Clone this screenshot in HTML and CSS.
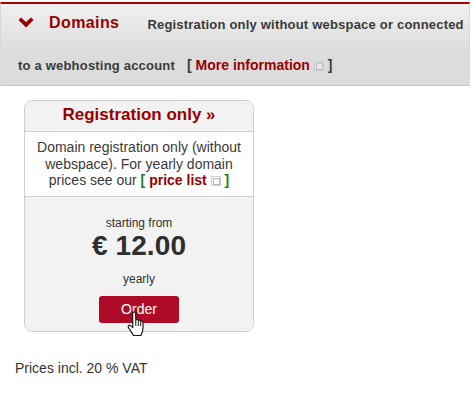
FILE: index.html
```html
<!DOCTYPE html>
<html lang="en">
<head>
<meta charset="utf-8">
<title>Domains</title>
<link rel="stylesheet" href="styles.css">
</head>
<body>
<header class="bar">
  <p class="bar-text"><svg class="chevron" width="16" height="11" viewBox="0 0 16 11"><path d="M0.5 3 L3 0.5 L8 5 L13 0.5 L15.5 3 L8 10.5 Z" fill="#990000"/></svg><span class="bar-title">Domains</span><span class="bar-desc">Registration only without webspace or connected to a webhosting account</span><span class="bar-more">[ <a class="link" href="#">More information</a> <svg class="ext" width="10" height="10" viewBox="0 0 10 10"><rect x="0.5" y="0.5" width="9" height="9" fill="none" stroke="#d0d0d0"/><rect x="2.5" y="2.5" width="6" height="6" fill="#e8e8e8" stroke="#bdbdbd"/></svg> ]</span></p>
</header>
<main class="content">
  <section class="card">
    <h2 class="card-title">Registration only »</h2>
    <p class="card-desc">Domain registration only (without webspace). For yearly domain prices see our <span class="bracket">[ <a class="link" href="#">price list</a> <svg class="ext" width="10" height="10" viewBox="0 0 10 10"><rect x="0.5" y="0.5" width="9" height="9" fill="none" stroke="#d0d0d0"/><rect x="2.5" y="2.5" width="6" height="6" fill="#fff" stroke="#b4b4b4"/></svg> ]</span></p>
    <div class="card-price">
      <div class="from">starting from</div>
      <div class="price">€ 12.00</div>
      <div class="period">yearly</div>
      <div class="btn-wrap">
        <a class="btn" href="#">Order</a>
        <svg class="cursor" width="20" height="26" viewBox="0 0 20 26"><path d="M6 1.5 C7 0.5 8.5 1 8.7 2.5 L8.8 9 C9.5 8.2 11 8.4 11.3 9.4 C12 8.8 13.4 9 13.7 10.2 C14.5 9.8 16 10.2 16 11.8 L16 17 C16 20 15 22 14 24.5 L6.5 24.5 C5.5 22.5 3.5 20 1.5 16.5 C0.6 15 2 13.6 3.4 14.6 L5.8 16.5 L5.6 3 C5.6 2.3 5.7 1.8 6 1.5 Z" fill="#fff" stroke="#1a1a1a" stroke-width="1.2" stroke-linejoin="round"/><path d="M8.8 9 L8.8 15 M11.3 9.4 L11.3 15 M13.7 10.2 L13.7 15" stroke="#1a1a1a" stroke-width="1" fill="none"/></svg>
      </div>
    </div>
  </section>
  <p class="note">Prices incl. 20 % VAT</p>
</main>
</body>
</html>
```
FILE: styles.css
```css
* { box-sizing: border-box; }
html, body { margin: 0; padding: 0; background: #fff; }
body {
  width: 474px;
  height: 402px;
  overflow: hidden;
  padding-top: 2px;
  font-family: "Liberation Sans", Arial, sans-serif;
  color: #333;
}
.bar {
  width: 470px;
  height: 84px;
  border-top: 2px solid #a80000;
  border-left: 1px solid #d8d8d8;
  border-right: 1px solid #d8d8d8;
  border-bottom: 1px solid #c8c8c8;
  background: linear-gradient(#f0f0f0, #dcdcdc 60%, #dcdcdc);
  padding: 0 0 0 17px;
}
.bar-text {
  margin: 0;
  font-size: 14px;
  font-weight: bold;
  line-height: 40px;
  color: #3a3a3a;
}
.chevron { margin-right: 15px; vertical-align: 1px; }
.bar-title {
  display: inline-block;
  font-size: 16px;
  line-height: 16px;
  letter-spacing: 0.4px;
  color: #990000;
  margin-right: 28px;
  vertical-align: 1px;
}
.bar-desc { font-size: 13px; letter-spacing: 0.2px; }
.bar-more { margin-left: 12px; }
.link { color: #990000; text-decoration: none; font-weight: bold; }
.ext { vertical-align: -1px; }
.content { padding: 14px 0 0 24px; }
.card {
  width: 230px;
  border: 1px solid #cfcfcf;
  border-radius: 8px;
  background: #fff;
}
.card-title {
  margin: 0;
  height: 31px;
  border-radius: 7px 7px 0 0;
  background: #f2f2f2;
  border-bottom: 1px solid #d2d2d2;
  font-size: 17px;
  line-height: 28px;
  font-weight: bold;
  text-align: center;
  color: #990000;
}
.card-desc {
  margin: 0;
  padding: 7px 6px 6px;
  height: 64px;
  font-size: 14px;
  line-height: 16.5px;
  text-align: center;
  color: #3a3a3a;
}
.bracket { font-weight: bold; color: #1d7a1d; }
.card-price {
  background: #f2f2f2;
  border-top: 1px solid #d2d2d2;
  border-radius: 0 0 7px 7px;
  height: 135px;
  padding-top: 19px;
  text-align: center;
}
.from { font-size: 12px; line-height: 14px; margin-bottom: 2px; color: #333; }
.price { font-size: 28px; line-height: 28px; font-weight: bold; color: #2e2e2e; letter-spacing: 0.1px; }
.period { font-size: 12px; line-height: 14px; margin-top: 12px; color: #333; }
.btn-wrap { position: relative; width: 80px; margin: 10px auto 0; }
.btn {
  display: block;
  height: 27px;
  border-radius: 3px;
  background: #ae0a28;
  color: #fff;
  font-size: 14px;
  line-height: 27px;
  text-decoration: none;
}
.cursor { position: absolute; left: 28px; top: 15px; }
.note { margin: 28px 0 0 -9px; font-size: 14px; line-height: 16px; color: #333; }
```
